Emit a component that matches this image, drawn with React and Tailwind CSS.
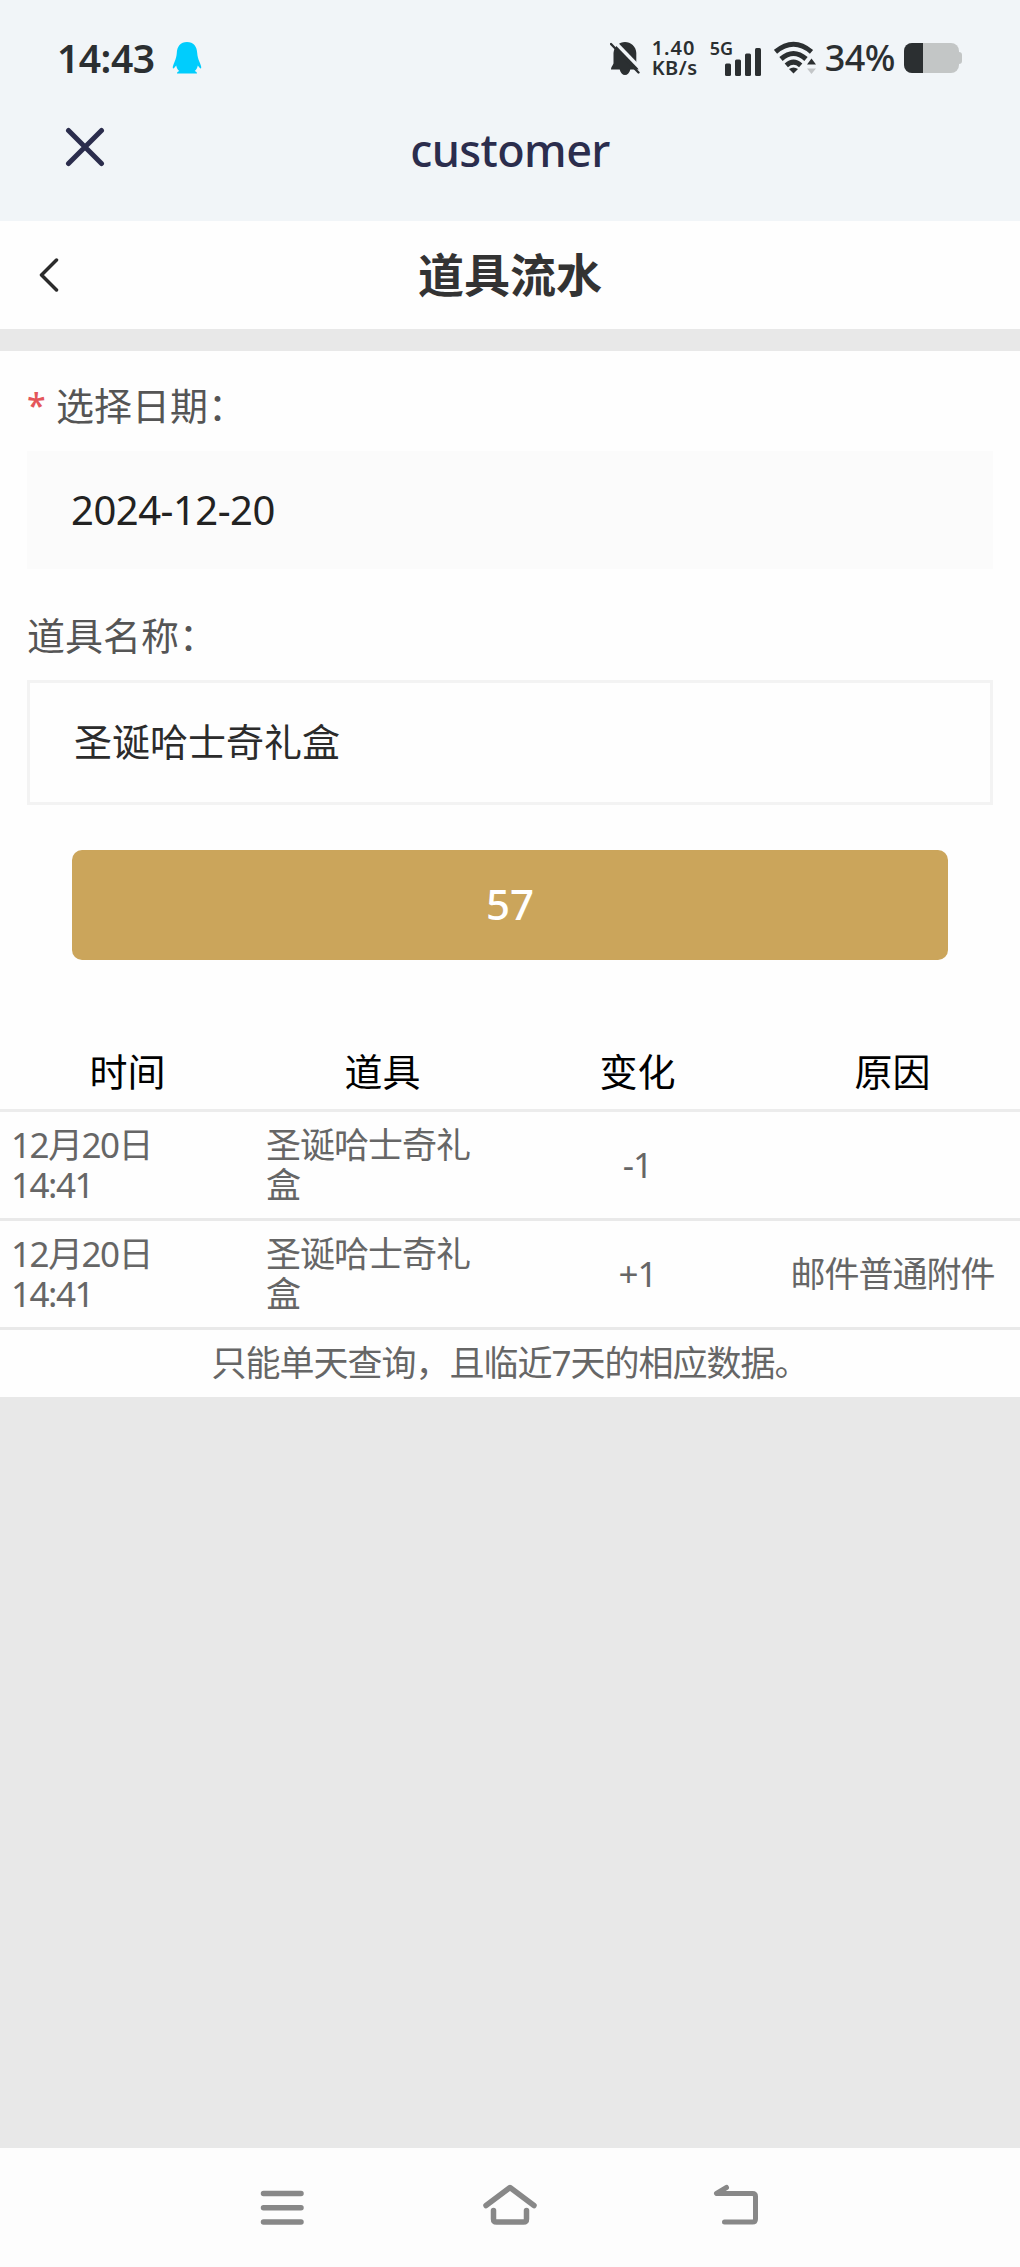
const HEADERS = ['时间', '道具', '变化', '原因'];

const RECORDS = [
    { id: 1, date: '12月20日', time: '14:41', item: '圣诞哈士奇礼盒', change: '-1', reason: '' },
    { id: 2, date: '12月20日', time: '14:41', item: '圣诞哈士奇礼盒', change: '+1', reason: '邮件普通附件' },
];

function QQIcon() {
    return (
        <svg className="ml-[17px] h-[32px] w-[30px]" viewBox="0 0 30 32" fill="#00cdfd">
            <path d="M15 0C8.500 0 5 4.500 4.800 11C4.600 14 3.800 17 2.500 20C1.500 22.500 .5 24.500 .8 26C1.200 27.200 2.800 25.500 4.200 23.500C4.700 26 5.600 27.800 7.300 29C5.800 29.500 5 30.300 5 31.500H25C25 30.300 24.200 29.500 22.700 29C24.400 27.800 25.300 26 25.800 23.500C27.200 25.500 28.800 27.200 29.200 26C29.500 24.500 28.500 22.500 27.500 20C26.200 17 25.400 14 25.200 11C25 4.500 21.500 0 15 0Z" />
        </svg>
    );
}

function BellOffIcon() {
    return (
        <svg className="h-[35px] w-[30px]" viewBox="0 0 30 35" fill="#2b2f31">
            <path d="M15 1C9.500 1 4 5.500 3.500 12V22C3.500 24 1.300 25 1 28.500H9.700C10.500 32 12.500 34 15 34S19.500 32 20.300 28.500H28.500C28.500 26 26.300 24 26.300 22V12C26.300 5.500 20.500 1 15 1Z" />
            <path d="M4 0L31 28" stroke="#f1f5f8" strokeWidth="3.500" />
            <path d="M1 3L28.500 31.500" stroke="#2b2f31" strokeWidth="2.400" strokeLinecap="round" />
        </svg>
    );
}

function SignalIcon() {
    return (
        <svg className="h-[28px] w-[37px]" viewBox="0 0 37 28" fill="#2b2f31">
            <rect x="0" y="15.500" width="6" height="12.500" rx="1.500" />
            <rect x="10" y="11.500" width="6" height="16.500" rx="1.500" />
            <rect x="20" y="5.500" width="6" height="22.500" rx="1.500" />
            <rect x="30" y="0" width="6" height="28" rx="1.500" />
        </svg>
    );
}

function WifiIcon() {
    return (
        <svg className="ml-[12px] h-[34px] w-[43px]" viewBox="0 0 43 34" fill="none">
            <g stroke="#2b2f31" strokeWidth="5">
                <path d="M1.500 10.800Q19.500 -4.300 37.500 10.800" />
                <path d="M7 18Q19.500 7 32 18" />
                <path d="M12.300 24.300Q19.500 18 26.700 24.300" />
            </g>
            <path d="M15 28Q19.500 25 24 28L19.500 32.500Z" fill="#2b2f31" />
            <path d="M33 23.500L37.500 17.500L42 23.500Z" fill="#2b2f31" />
            <path d="M33 27.500L37.500 33L42 27.500Z" fill="#c3c6c8" />
        </svg>
    );
}

function Battery() {
    return (
        <div className="ml-[9px] flex items-center">
            <div className="h-[30px] w-[55px] overflow-hidden rounded-lg bg-[#c3c6c6]">
                <div className="h-full w-[19px] bg-[#2b2f31]" />
            </div>
            <div className="h-3 w-[3px] rounded-r-full bg-[#c3c6c6]" />
        </div>
    );
}

function StatusBar() {
    return (
        <div className="flex h-[116px] items-center justify-between pl-[57px] pr-[58px] text-[#2b2f31]">
            <div className="flex items-center">
                <span className="-mt-[2px] text-[39px] leading-none font-semibold tracking-[-0.5px]">14:43</span>
                <QQIcon />
            </div>
            <div className="flex items-center">
                <BellOffIcon />
                <div className="ml-[12px] flex w-[48px] flex-col text-[20px] leading-[20px] font-semibold">
                    <span className="tracking-[1px]">1.40</span>
                    <span className="tracking-[0.5px]">KB/s</span>
                </div>
                <div className="ml-[10px] flex h-[36px]">
                    <span className="w-[15px] text-[18px] leading-[16px] font-semibold">5G</span>
                    <div className="flex items-end">
                        <SignalIcon />
                    </div>
                </div>
                <WifiIcon />
                <span className="ml-[8px] text-[36px] leading-none font-medium tracking-[-0.5px]">34%</span>
                <Battery />
            </div>
        </div>
    );
}

function AppHeader() {
    return (
        <div className="grid h-[105px] grid-cols-[1fr_auto_1fr]">
            <button className="ml-[65px] mt-[11px] h-10 w-10" aria-label="关闭">
                <svg className="h-10 w-10" viewBox="0 0 40 40" stroke="#2b2d4d" strokeWidth="5" strokeLinecap="round">
                    <path d="M3.500 3.500L36.500 36.500M36.500 3.500L3.500 36.500" />
                </svg>
            </button>
            <h1 className="-mt-px text-[45px] leading-[70px] font-medium tracking-[-0.6px] text-[#2b2d4d]">customer</h1>
        </div>
    );
}

function PageTitle() {
    return (
        <div className="grid h-[108px] grid-cols-[1fr_auto_1fr] items-center">
            <button className="ml-[39px] w-5" aria-label="返回">
                <svg className="h-[34px] w-5" viewBox="0 0 20 34" fill="none" stroke="#2b2b2b" strokeWidth="3.500" strokeLinecap="round" strokeLinejoin="round">
                    <path d="M17.500 2L2.500 17L17.500 32" />
                </svg>
            </button>
            <h2 className="-mt-[3px] text-[46px] leading-none font-bold text-[#333]">道具流水</h2>
        </div>
    );
}

function QueryForm() {
    return (
        <div className="flex flex-col px-[27px] text-[38px] text-[#555]">
            <label className="mt-[27px] flex h-[54px] items-center">
                <span className="w-[29px] text-[34px] font-medium text-[#e4565a]">*</span>
                选择日期：
            </label>
            <div className="mt-[19px] flex h-[118px] items-center bg-[#fbfbfb] px-[44px] text-[40px] tracking-[-0.5px] text-[#222]">
                2024-12-20
            </div>
            <label className="mt-[39px] flex h-[54px] items-center">道具名称：</label>
            <div className="mt-[18px] flex h-[125px] items-center border-[3px] border-[#f3f3f3] px-[44px] pb-[3px] text-[#2b2b2b]">
                圣诞哈士奇礼盒
            </div>
            <button className="mx-[45px] mt-[45px] h-[110px] rounded-[10px] bg-[#cba55b] pb-[3px] text-[42px] font-medium text-white">
                57
            </button>
        </div>
    );
}

function RecordTable() {
    return (
        <div className="mt-[74px]">
            <div className="grid h-[78px] grid-cols-4 items-center border-b-[3px] border-[#ececec] text-center text-[38px] text-black">
                {HEADERS.map((title) => (
                    <div key={title}>{title}</div>
                ))}
            </div>
            {RECORDS.map((row) => (
                <div
                    key={row.id}
                    className="grid h-[109px] grid-cols-4 items-center border-b-[3px] border-[#e9e9e9] text-[35px] leading-[40px] tracking-[-1px] text-[#666]"
                >
                    <div className="px-[11px] tracking-[-1.500px]">
                        {row.date}
                        <br />
                        {row.time}
                    </div>
                    <div className="px-[11px]">{row.item}</div>
                    <div className="text-center">{row.change}</div>
                    <div className="text-center">{row.reason}</div>
                </div>
            ))}
            <p className="flex h-[67px] items-center justify-center text-[35px] tracking-[-1px] text-[#666]">
                只能单天查询，且临近7天的相应数据。
            </p>
        </div>
    );
}

function SystemNav() {
    return (
        <div className="flex h-[119px] items-center justify-center gap-[171px] bg-[#fdfdfd]">
            <svg className="h-[48px] w-[60px]" viewBox="0 0 60 48" stroke="#888" strokeWidth="5.500" strokeLinecap="round">
                <path d="M12.500 9.500H50M12.500 23.700H50M12.500 38H50" />
            </svg>
            <svg className="h-[48px] w-[56px]" viewBox="0 0 56 48" fill="none" stroke="#888" strokeWidth="5.500" strokeLinecap="round" strokeLinejoin="round">
                <path d="M4 21.500L28 3.500L52 21.500" />
                <path d="M11.500 26.500V35Q11.500 38 14.500 38H41.500Q44.500 38 44.500 35V26.500" />
            </svg>
            <svg className="h-[48px] w-[60px]" viewBox="0 0 60 48" fill="none" stroke="#888" strokeWidth="5" strokeLinecap="round" strokeLinejoin="round">
                <path d="M17.500 3.500L7.500 9.500H43.500Q46.500 9.500 46.500 12.500V35Q46.500 38 43.500 38H15.500" />
            </svg>
        </div>
    );
}

export default function App() {
    return (
        <div className="flex h-[2267px] w-[1020px] flex-col bg-[#e8e8e8] font-['Noto_Sans','Noto_Sans_CJK_SC',sans-serif]">
            <header className="bg-[#f1f5f8]">
                <StatusBar />
                <AppHeader />
            </header>
            <div className="bg-[#fefefe]">
                <PageTitle />
            </div>
            <main className="mt-[22px] bg-[#fefefe]">
                <QueryForm />
                <RecordTable />
            </main>
            <div className="mt-auto">
                <SystemNav />
            </div>
        </div>
    );
}
